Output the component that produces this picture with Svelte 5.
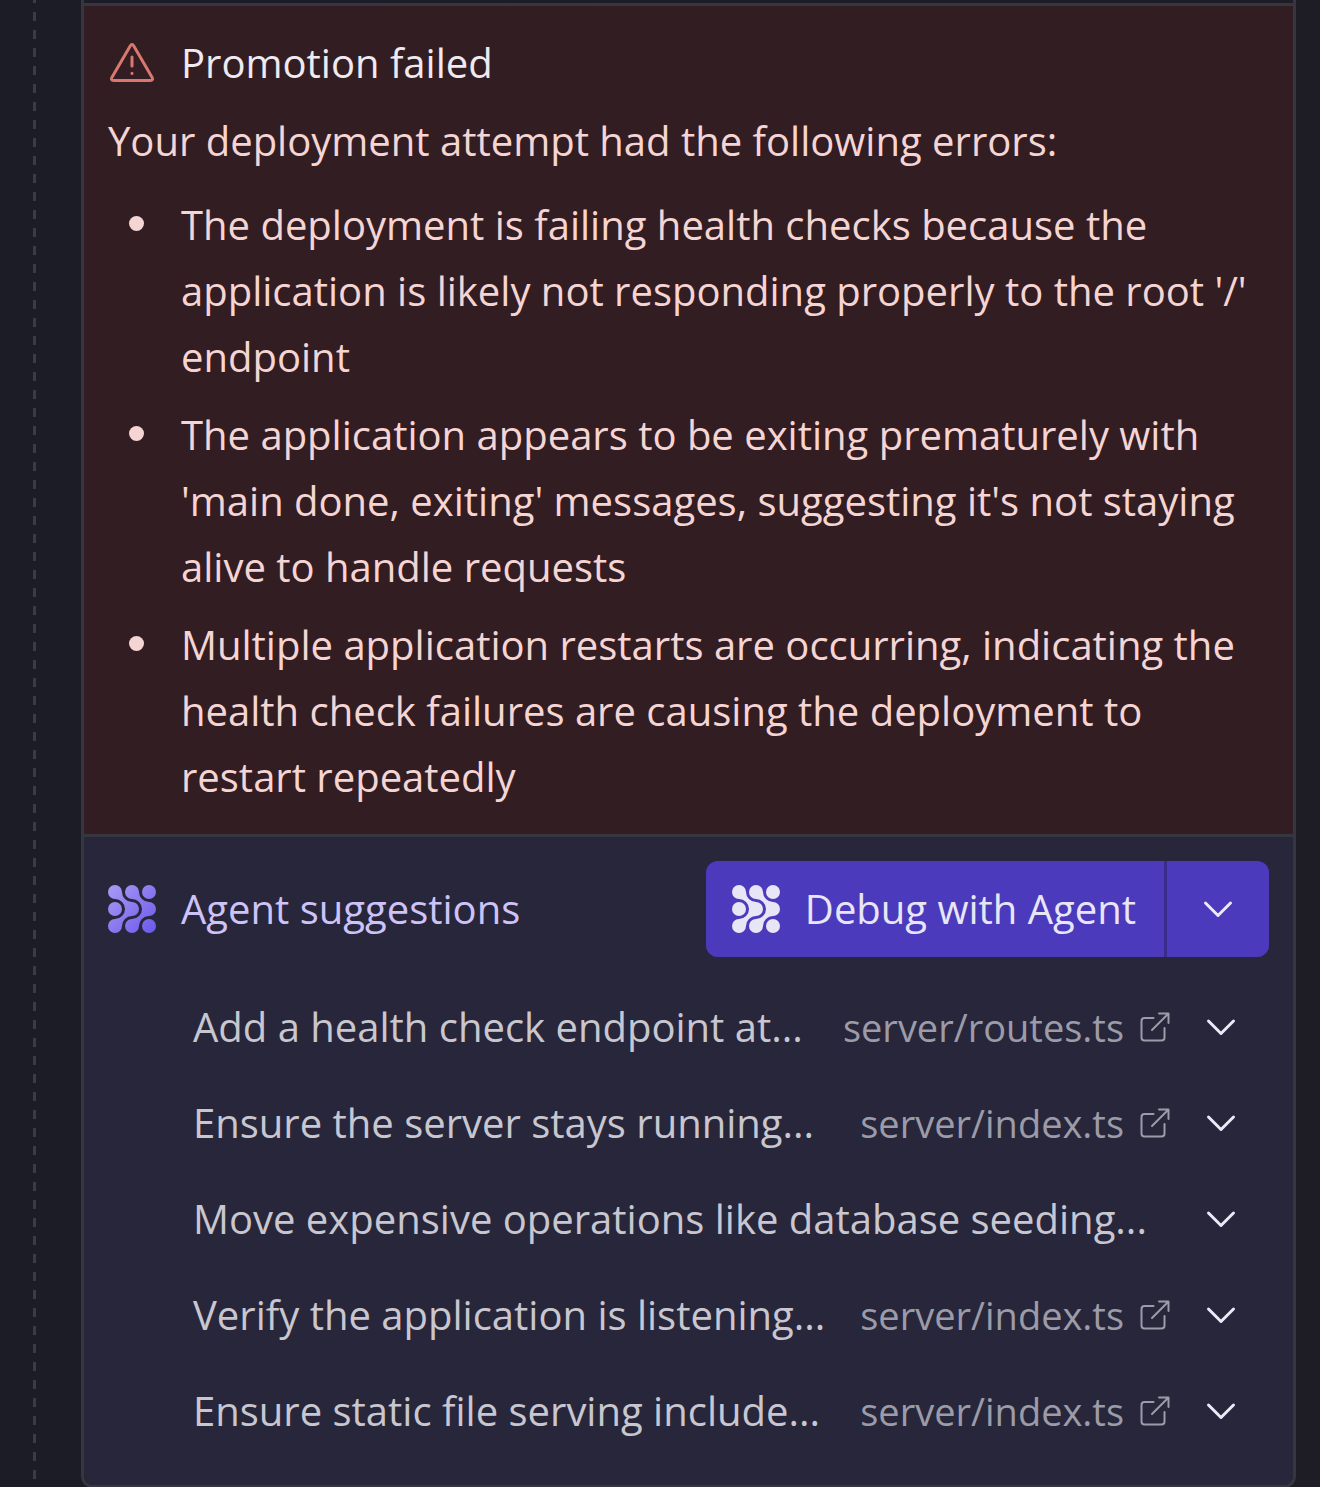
<script>
  const errors = [
    "The deployment is failing health checks because the application is likely not responding properly to the root '/' endpoint",
    "The application appears to be exiting prematurely with 'main done, exiting' messages, suggesting it's not staying alive to handle requests",
    "Multiple application restarts are occurring, indicating the health check failures are causing the deployment to restart repeatedly"
  ];

  const suggestions = [
    { text: 'Add a health check endpoint at...', file: 'server/routes.ts' },
    { text: 'Ensure the server stays running...', file: 'server/index.ts' },
    { text: 'Move expensive operations like database seeding...', file: null },
    { text: 'Verify the application is listening...', file: 'server/index.ts' },
    { text: 'Ensure static file serving include...', file: 'server/index.ts' }
  ];
</script>

{#snippet agentIcon(fill)}
  <svg class="agent-icon" viewBox="0 0 48 48" aria-hidden="true">
    <defs>
      <linearGradient id="agent-gradient" gradientUnits="userSpaceOnUse" x1="0" y1="0" x2="48" y2="48">
        <stop offset="0" stop-color="#a99bf5" />
        <stop offset="1" stop-color="#6a59ea" />
      </linearGradient>
    </defs>
    <g {fill}>
      <path d="M14 7A10 10 0 0 0 24 17A7 7 0 0 1 24 31A10 10 0 0 0 14 41A7 7 0 1 1 7 34A10 10 0 0 0 7 14A7 7 0 1 1 14 7Z" />
      <path d="M31 7A10 10 0 0 0 41 17A7 7 0 0 1 41 31A10 10 0 0 0 31 41A7 7 0 1 1 24 34A10 10 0 0 0 24 14A7 7 0 1 1 31 7Z" />
      <circle cx="41" cy="7" r="7" />
      <circle cx="7" cy="24" r="7" />
      <circle cx="41" cy="41" r="7" />
    </g>
  </svg>
{/snippet}

{#snippet chevron()}
  <svg class="chevron" viewBox="0 0 48 48" aria-hidden="true">
    <path d="M11.5 18L24 30.5L36.5 18" />
  </svg>
{/snippet}

<main class="page">
  <div class="rail"></div>
  <div class="card">
    <section class="alert">
      <h2 class="title">
        <svg class="warning" viewBox="0 0 48 48" aria-hidden="true">
          <path d="M22.2 7Q24 4.2 25.8 7L44 38.2Q45.6 41.5 42.3 41.5H5.7Q2.4 41.5 4 38.2Z" />
          <path d="M24 18V27M24 34.3V34.4" />
        </svg>
        <span>Promotion failed</span>
      </h2>
      <p class="intro">Your deployment attempt had the following errors:</p>
      <ul class="errors">
        {#each errors as error}
          <li>{error}</li>
        {/each}
      </ul>
    </section>

    <section class="agent">
      <div class="agent-head">
        <h2 class="agent-title">
          {@render agentIcon('url(#agent-gradient)')}
          <span>Agent suggestions</span>
        </h2>
        <div class="split">
          <button class="debug" type="button">
            {@render agentIcon('#e8e6f6')}
            <span>Debug with Agent</span>
          </button>
          <button class="more" type="button" aria-label="More debug options">
            {@render chevron()}
          </button>
        </div>
      </div>
      <ul class="suggestions">
        {#each suggestions as item}
          <li class="row">
            <span class="text">{item.text}</span>
            {#if item.file}
              <a class="file" href="#{item.file}">
                <span>{item.file}</span>
                <svg viewBox="0 0 30 30" aria-hidden="true">
                  <path d="M13.5 6H4.5Q1.5 6 1.5 9V25.5Q1.5 28.5 4.5 28.5H21.5Q24.5 28.5 24.5 25.5V16" />
                  <path d="M12 18L28.5 1.5M19 1.5H28.5V11" />
                </svg>
              </a>
            {/if}
            <button class="toggle" type="button" aria-label="Show details">
              {@render chevron()}
            </button>
          </li>
        {/each}
      </ul>
    </section>
  </div>
</main>

<style>
  :global(body) {
    margin: 0;
    background: #1c1c25;
  }

  .page {
    display: flex;
    padding-right: 24px;
    background: linear-gradient(90deg, #1b1c26, #1e1d25);
    font-family: 'Open Sans', 'Noto Sans', sans-serif;
    font-size: 40px;
    line-height: 66px;
    color: #c8c7d0;
  }

  h2,
  p,
  ul {
    margin: 0;
    padding: 0;
    font-size: inherit;
    font-weight: 400;
  }

  button {
    margin: 0;
    padding: 0;
    border: 0;
    font: inherit;
    color: inherit;
    background: none;
    cursor: pointer;
  }

  svg {
    display: block;
    flex: none;
    fill: none;
    stroke-linecap: round;
    stroke-linejoin: round;
    stroke-width: 3px;
  }

  .rail {
    flex: none;
    width: 3px;
    margin: 0 45px 8px 33px;
    background: repeating-linear-gradient(#3a3b43 0 3px, transparent 3px 12px, #3a3b43 12px 18px);
  }

  .card {
    flex: 1;
    min-width: 0;
    padding-top: 3px;
    border: 3px solid #35363f;
    border-top: 0;
    border-radius: 0 0 12px 12px;
  }

  .alert {
    padding: 24px;
    border-top: 3px solid #35363f;
    border-bottom: 3px solid #35363f;
    background: #321d22;
    color: #f5d5d4;
  }

  .title,
  .agent-title {
    display: flex;
    align-items: center;
    gap: 25px;
  }

  .title {
    color: #efeaf0;
  }

  .warning {
    width: 48px;
    height: 48px;
    stroke: #d87870;
  }

  .intro {
    margin: 12px 0 18px;
  }

  .errors {
    display: grid;
    gap: 12px;
    list-style: none;
  }

  .errors li {
    position: relative;
    padding-left: 73px;
  }

  .errors li::before {
    content: '';
    position: absolute;
    top: 24px;
    left: 21px;
    width: 15px;
    height: 15px;
    border-radius: 50%;
    background: currentColor;
  }

  .agent {
    padding: 24px 24px 26px;
    border-radius: 0 0 9px 9px;
    background: #28263a;
  }

  .agent-head {
    display: flex;
    align-items: center;
    justify-content: space-between;
  }

  .agent-title {
    color: #cdc3f8;
  }

  .agent-icon {
    width: 48px;
    height: 48px;
  }

  .split {
    display: flex;
    gap: 3px;
    height: 96px;
    border-radius: 12px;
    overflow: hidden;
    background: #392c8d;
    color: #e8e6f6;
  }

  .debug {
    display: flex;
    align-items: center;
    gap: 25px;
    padding: 0 28px 0 26px;
    background: #4b3abb;
  }

  .more {
    display: grid;
    place-items: center;
    width: 102px;
    background: #4b3abb;
  }

  .chevron {
    width: 48px;
    height: 48px;
    stroke: #eceaf6;
  }

  .suggestions {
    margin: 22px 0 0 85px;
    list-style: none;
  }

  .row {
    display: flex;
    align-items: center;
    height: 96px;
    padding-right: 24px;
  }

  .text {
    flex: 1;
    min-width: 0;
    white-space: nowrap;
  }

  .file {
    display: flex;
    align-items: center;
    gap: 16px;
    margin-right: 27px;
    font-size: 38px;
    color: #9c9ba8;
    text-decoration: none;
  }

  .file svg {
    width: 30px;
    height: 30px;
    stroke: currentColor;
    stroke-width: 2px;
  }
</style>
